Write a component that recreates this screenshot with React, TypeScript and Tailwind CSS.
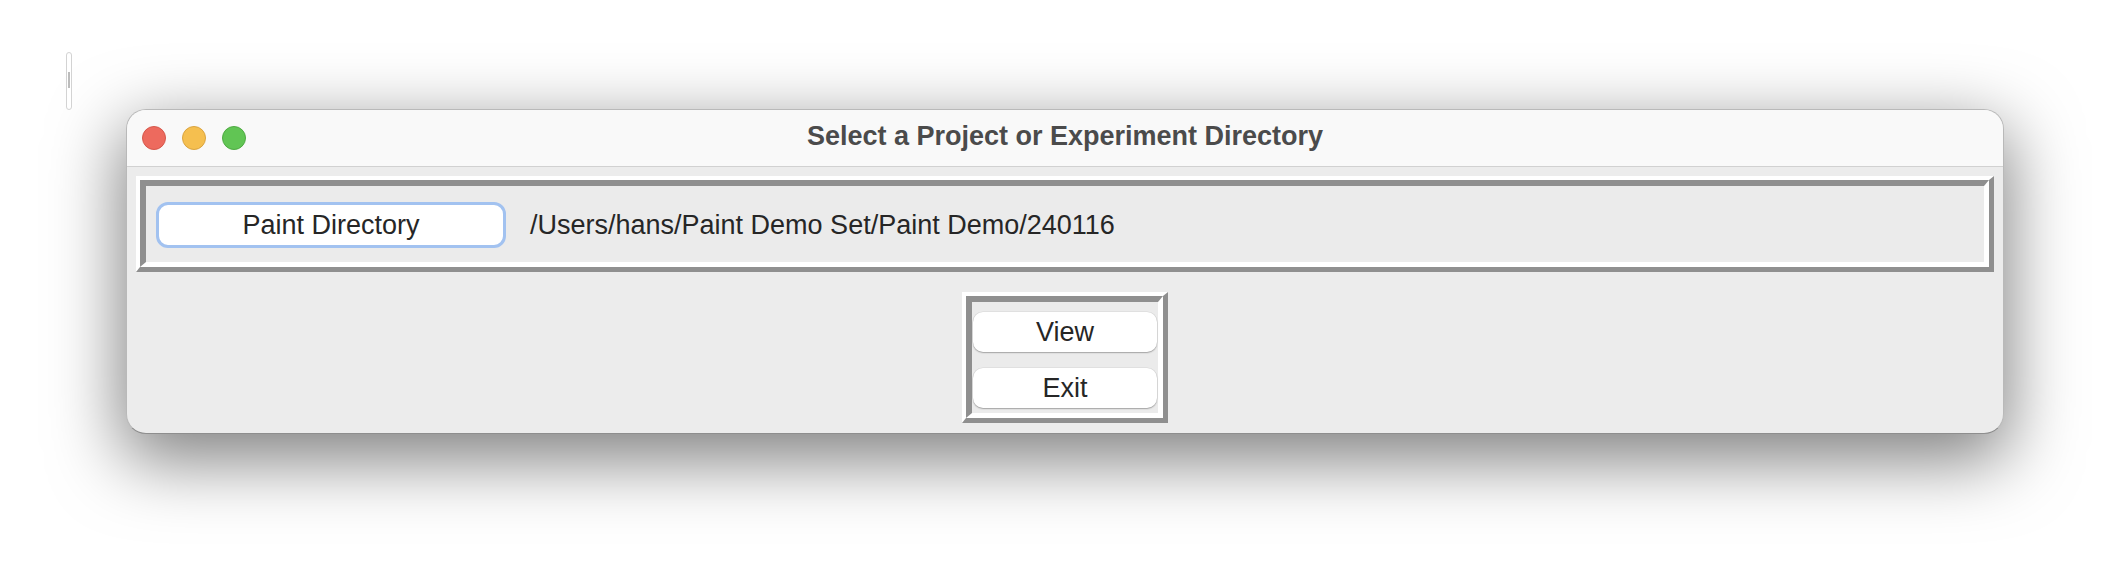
import React from 'react';

const font = "font-['Liberation_Sans',Arial,sans-serif]";

function TrafficLights() {
  return (
    <div className="flex items-center gap-[16px] pl-[15px]">
      <span className="w-[24px] h-[24px] rounded-full bg-[#ed6a5e] border border-[#d5584c]" />
      <span className="w-[24px] h-[24px] rounded-full bg-[#f5bf4f] border border-[#d9a441]" />
      <span className="w-[24px] h-[24px] rounded-full bg-[#61c554] border border-[#4faa43]" />
    </div>
  );
}

// Tk style "ridge" relief: light/dark outer, dark/light inner
function Ridge({ children, className = '' }: { children: React.ReactNode; className?: string }) {
  return (
    <div className="border-t-4 border-l-4 border-b-[5px] border-r-[5px] border-t-white border-l-white border-b-[#8f8f8f] border-r-[#8f8f8f]">
      <div
        className={`border-t-[6px] border-l-[6px] border-b-[5px] border-r-[5px] border-t-[#8f8f8f] border-l-[#8f8f8f] border-b-white border-r-white bg-[#ebebeb] ${className}`}
      >
        {children}
      </div>
    </div>
  );
}

function MacButton({ label }: { label: string }) {
  return (
    <div className="w-[184px] h-[40px] rounded-[10px] bg-white flex items-center justify-center text-[27px] text-[#262626] shadow-[0_1px_1.5px_rgba(0,0,0,0.28),0_0_0_0.5px_rgba(0,0,0,0.08)]">
      {label}
    </div>
  );
}

export default function App() {
  return (
    <div className={`relative w-[2116px] h-[582px] bg-white pl-[126px] pt-[109px] ${font}`}>
      {/* stray scroller on the desktop */}
      <div className="absolute left-[66px] top-[52px] w-[6px] h-[58px] rounded-full border border-[#d3d3d3] bg-white flex justify-center pt-[19px]">
        <div className="w-[2px] h-[16px] bg-[#bcbcbc]" />
      </div>

      <div className="w-[1878px] h-[325px] rounded-[20px] overflow-hidden border border-[#b9b9b9] border-b-[#8e8e8e] bg-[#ececec] shadow-[0_22px_70px_4px_rgba(0,0,0,0.5)]">
        {/* title bar */}
        <div className="h-[57px] bg-[#f9f9f9] border-b border-[#d1d1d1] grid grid-cols-[1fr_auto_1fr] items-center">
          <TrafficLights />
          <div className="text-[27px] font-bold text-[#4b4b4b] pb-[4px]">
            Select a Project or Experiment Directory
          </div>
          <div />
        </div>

        <div className="px-[9px] pt-[9px] flex flex-col items-center">
          <div className="w-full h-[96px]">
            <Ridge className="h-[87px] flex items-center pl-[10px] pt-[2px]">
              <div className="w-[350px] h-[46px] rounded-[12px] border-[3px] border-[#a2c2f0] bg-white flex items-center justify-center text-[27px] text-[#262626]">
                Paint Directory
              </div>
              <span className="ml-[24px] text-[27px] text-[#262626]">
                /Users/hans/Paint Demo Set/Paint Demo/240116
              </span>
            </Ridge>
          </div>

          <div className="mt-[20px] w-[206px]">
            <Ridge className="flex flex-col items-center gap-[16px] pt-[10px] pb-[5px]">
              <MacButton label="View" />
              <MacButton label="Exit" />
            </Ridge>
          </div>
        </div>
      </div>
    </div>
  );
}
